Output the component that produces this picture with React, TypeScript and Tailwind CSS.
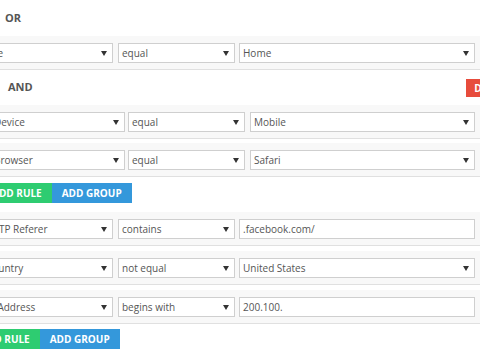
import React from "react";

interface RuleProps {
  field: string;
  op: string;
  value: string;
  input?: boolean;
  nested?: boolean;
}

function Arrow() {
  return (
    <svg width="6" height="5" viewBox="0 0 6 5" className="shrink-0">
      <polygon points="0,0 6,0 3,5" fill="#333" />
    </svg>
  );
}

function Field({ value, className, arrow = true }: { value: string; className: string; arrow?: boolean }) {
  return (
    <div
      className={`h-[20px] shrink-0 bg-white border border-[#cfcfcf] flex items-center pl-[3px] pr-[5px] text-[10px] text-[#555] ${className}`}
    >
      <span className="flex-1 whitespace-nowrap leading-[14px]">{value}</span>
      {arrow && <Arrow />}
    </div>
  );
}

function Rule({ field, op, value, input, nested }: RuleProps) {
  return (
    <div className="h-[34px] bg-[#f8f8f8] border-b border-[#e0e0e0] pt-[7px] flex">
      {nested ? (
        <>
          <Field value={field} className="ml-[-10px] w-[135px]" />
          <Field value={op} className="ml-[3px] w-[117px]" />
          <Field value={value} arrow={!input} className="ml-[5px] w-[225px]" />
        </>
      ) : (
        <>
          <Field value={field} className="ml-[-18px] w-[131px]" />
          <Field value={op} className="ml-[5px] w-[117px]" />
          <Field value={value} arrow={!input} className="ml-[4px] w-[236px]" />
        </>
      )}
    </div>
  );
}

function AddButtons({ nested }: { nested?: boolean }) {
  return (
    <div className={`flex h-[20px] ${nested ? "ml-[-18px]" : "ml-[-30px]"}`}>
      <button className="bg-[#2ecc71] text-white font-bold text-[10px] px-[10px] leading-[14px]">ADD RULE</button>
      <button className="bg-[#3498db] text-white font-bold text-[10px] px-[10px] leading-[14px]">ADD GROUP</button>
    </div>
  );
}

export default function App() {
  return (
    <div
      className="w-[480px] h-[360px] overflow-hidden bg-white"
      style={{ fontFamily: "'Open Sans', 'Liberation Sans', sans-serif" }}
    >
      <div className="h-[36px] flex items-center pl-[5px] text-[11px] font-bold text-[#555]">OR</div>
      <Rule field="Site" op="equal" value="Home" />

      {/* nested AND group */}
      <div className="flex flex-col">
        <div className="h-[35px] flex items-center pl-[8px]">
          <span className="text-[11px] font-bold text-[#555]">AND</span>
          <button className="h-[18px] shrink-0 bg-[#e74c3c] text-white font-bold text-[10px] px-[8px] ml-auto mr-[-38px] leading-[14px]">
            DELETE
          </button>
        </div>
        <Rule nested field="Device" op="equal" value="Mobile" />
        <div className="mt-[4px]">
          <Rule nested field="Browser" op="equal" value="Safari" />
        </div>
        <div className="mt-[6px]">
          <AddButtons nested />
        </div>
      </div>

      <div className="mt-[9px] flex flex-col gap-[5px]">
        <Rule field="HTTP Referer" op="contains" value=".facebook.com/" input />
        <Rule field="Country" op="not equal" value="United States" />
        <Rule field="IP Address" op="begins with" value="200.100." input />
      </div>
      <div className="mt-[5px]">
        <AddButtons />
      </div>
    </div>
  );
}
